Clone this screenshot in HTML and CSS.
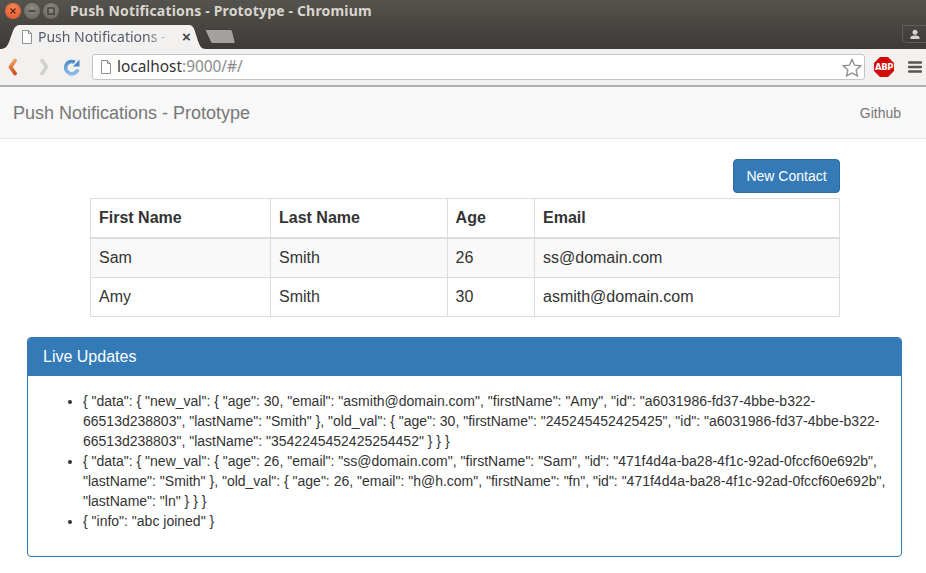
FILE: index.html
```html
<!DOCTYPE html>
<html lang="en">
<head>
<meta charset="utf-8">
<title>Push Notifications - Prototype</title>
<link rel="stylesheet" href="styles.css">
</head>
<body>
<header class="chrome">
  <div class="titlebar">
    <div class="win-buttons">
      <span class="win-btn win-close"><svg width="8" height="8" viewBox="0 0 8 8"><path d="M1.500 1.500l5 5M6.500 1.500l-5 5" stroke="#6b2410" stroke-width="1.400"/></svg></span>
      <span class="win-btn win-min"><svg width="8" height="8" viewBox="0 0 8 8"><path d="M0.500 4h7" stroke="#3c3b37" stroke-width="1.500"/></svg></span>
      <span class="win-btn win-max"><svg width="8" height="8" viewBox="0 0 8 8"><rect x="1" y="1" width="6" height="6" fill="none" stroke="#3c3b37" stroke-width="1.300"/></svg></span>
    </div>
    <span class="win-title">Push Notifications - Prototype - Chromium</span>
  </div>
  <div class="tabstrip">
    <div class="tab">
      <svg class="tab-shape" width="206" height="26" viewBox="0 0 206 26"><path d="M0 26C5 26 7 24 9 19L13 8C14.500 4.500 16 2 20 2H188C192 2 193.500 4 194.500 7L198 18C200 23 201 26 206 26Z" fill="#f2f1f0"/></svg>
      <svg class="tab-page" width="12" height="14" viewBox="0 0 12 14"><path d="M1.500.5h6l3 3v10h-9z" fill="#fff" stroke="#8f8f8f"/><path d="M7.500.5v3h3" fill="none" stroke="#8f8f8f"/></svg>
      <span class="tab-label">Push Notifications -</span>
      <span class="tab-x">×</span>
    </div>
    <svg class="newtab" width="32" height="15" viewBox="0 0 32 15"><path d="M2.500 .5H26C27.500 .5 28 1.200 28.500 2.500L31 12.500C31.300 13.800 30.800 14.500 29.500 14.500H9C7.500 14.500 7 13.800 6.500 12.800L1.500 2C1 1 1.500 .5 2.500 .5Z" fill="#a3a29e" stroke="#35342f" stroke-width=".8"/></svg>
    <div class="profile"><svg width="12" height="11" viewBox="0 0 12 11"><circle cx="6" cy="3.200" r="2.500" fill="#d5d3ce"/><path d="M1.500 10V8.500C1.500 7 4 6.500 6 6.500S10.500 7 10.500 8.500V10Z" fill="#d5d3ce"/></svg></div>
  </div>
  <div class="toolbar">
    <svg class="back" width="11" height="18" viewBox="0 0 11 18">
      <defs><linearGradient id="backFill" x1="0" y1="0" x2="0" y2="1"><stop offset="0" stop-color="#eda05f"/><stop offset="1" stop-color="#cf4f1d"/></linearGradient></defs>
      <path d="M8 2.500L3.500 9 8 15.500" fill="none" stroke="url(#backFill)" stroke-width="3.800" stroke-linecap="round" stroke-linejoin="round"/>
    </svg>
    <svg class="forward" width="11" height="18" viewBox="0 0 11 18"><path d="M3 2.500L7.500 9 3 15.500" fill="none" stroke="#d2d1ce" stroke-width="3.800" stroke-linecap="round" stroke-linejoin="round"/></svg>
    <svg class="reload" width="18" height="18" viewBox="0 0 18 18">
      <defs><linearGradient id="reloadFill" x1="0" y1="0" x2="0" y2="1"><stop offset="0" stop-color="#4f8fcb"/><stop offset="1" stop-color="#8dbce6"/></linearGradient></defs>
      <path d="M14.800 11.500A6.200 6.200 0 1 1 11.800 4.200" fill="none" stroke="url(#reloadFill)" stroke-width="3.600"/>
      <path d="M10 8.500H16.500V1.500Z" fill="#4a8ac6"/>
    </svg>
    <div class="omnibox">
      <svg width="12" height="14" viewBox="0 0 12 14"><path d="M1.500.5h6l3 3v10h-9z" fill="#fff" stroke="#8f8f8f"/><path d="M7.500.5v3h3" fill="none" stroke="#8f8f8f"/></svg>
      <span class="url"><span class="url-host">localhost</span>:9000/#/</span>
      <svg class="star" width="20" height="19" viewBox="0 0 20 19"><path d="M10 1.500l2.600 5.600 6 .7-4.500 4.100 1.300 6L10 14.900l-5.400 3 1.300-6L1.400 7.800l6-.7z" fill="#fff" stroke="#8e8e8e" stroke-width="1.300"/></svg>
    </div>
    <div class="abp">ABP</div>
    <svg class="menu-icon" width="14" height="14" viewBox="0 0 14 14"><path d="M1 2.500h12M1 7h12M1 11.500h12" stroke="#55544f" stroke-width="2.400" stroke-linecap="round"/></svg>
  </div>
</header>

<nav class="navbar">
  <a class="brand">Push Notifications - Prototype</a>
  <a class="nav-link">Github</a>
</nav>

<main class="content">
  <section class="contacts">
    <div class="actions"><button class="btn-primary">New Contact</button></div>
    <table class="table">
      <colgroup><col class="col-first"><col class="col-last"><col class="col-age"><col class="col-email"></colgroup>
      <thead><tr><th>First Name</th><th>Last Name</th><th>Age</th><th>Email</th></tr></thead>
      <tbody>
        <tr class="striped"><td>Sam</td><td>Smith</td><td>26</td><td>ss@domain.com</td></tr>
        <tr><td>Amy</td><td>Smith</td><td>30</td><td>asmith@domain.com</td></tr>
      </tbody>
    </table>
  </section>
  <section class="panel">
    <div class="panel-heading">Live Updates</div>
    <div class="panel-body">
      <ul class="updates">
        <li>{ "data": { "new_val": { "age": 30, "email": "asmith@domain.com", "firstName": "Amy", "id": "a6031986-fd37-4bbe-b322-66513d238803", "lastName": "Smith" }, "old_val": { "age": 30, "firstName": "245245452425425", "id": "a6031986-fd37-4bbe-b322-66513d238803", "lastName": "3542245452425254452" } } }</li>
        <li>{ "data": { "new_val": { "age": 26, "email": "ss@domain.com", "firstName": "Sam", "id": "471f4d4a-ba28-4f1c-92ad-0fccf60e692b", "lastName": "Smith" }, "old_val": { "age": 26, "email": "h@h.com", "firstName": "fn", "id": "471f4d4a-ba28-4f1c-92ad-0fccf60e692b", "lastName": "ln" } } }</li>
        <li>{ "info": "abc joined" }</li>
      </ul>
    </div>
  </section>
</main>
</body>
</html>
```
FILE: styles.css
```css
* { box-sizing: border-box; }
html, body { margin: 0; padding: 0; }
body {
  width: 926px;
  height: 573px;
  overflow: hidden;
  background: #fff;
  color: #333;
  font-family: "Liberation Sans", Arial, sans-serif;
  font-size: 14px;
  line-height: 20px;
}

/* Browser chrome */
.chrome {
  background: linear-gradient(#55534d 0, #3c3b37 48px);
}
.titlebar {
  height: 23px;
  display: flex;
  align-items: center;
  padding: 0 0 1px 5px;
}
.win-buttons { display: flex; gap: 3px; }
.win-btn {
  width: 16px;
  height: 16px;
  border-radius: 50%;
  display: flex;
  align-items: center;
  justify-content: center;
}
.win-close { background: radial-gradient(circle at 50% 35%, #f58a5c, #dc4f23); }
.win-min, .win-max { background: radial-gradient(circle at 50% 35%, #8e8c86, #62605a); }
.win-title {
  margin-left: 11px;
  color: #d8d5cd;
  font-family: "Noto Sans", "Open Sans", sans-serif;
  font-weight: 700;
  font-size: 14px;
  letter-spacing: .17px;
}
.tabstrip {
  height: 26px;
  display: flex;
  align-items: flex-end;
}
.tab {
  position: relative;
  width: 206px;
  height: 26px;
  display: flex;
  align-items: center;
  padding: 2px 0 0 21px;
}
.tab-shape { position: absolute; left: 0; top: 0; }
.tab-page { position: relative; flex: none; }
.tab-label {
  position: relative;
  margin-left: 5px;
  width: 134px;
  overflow: hidden;
  white-space: nowrap;
  color: #555c68;
  font-family: "Noto Sans", "Open Sans", sans-serif;
  font-size: 14px;
  -webkit-mask-image: linear-gradient(90deg, #000 82%, rgba(0,0,0,.3) 93%);
  mask-image: linear-gradient(90deg, #000 82%, rgba(0,0,0,.3) 93%);
}
.tab-x {
  position: relative;
  margin-left: 10px;
  color: #444;
  font-weight: 700;
  font-size: 15px;
}
.newtab { margin: 0 0 5px -2px; }
.profile {
  margin: 0 0 6px auto;
  width: 24px;
  height: 18px;
  border: 1px solid #5f5d57;
  border-right: 0;
  border-radius: 2px 0 0 5px;
  display: flex;
  align-items: center;
  justify-content: center;
}
.toolbar {
  height: 38px;
  background: #f2f1f0;
  border-bottom: 2px solid #aeaeae;
  display: flex;
  align-items: center;
  padding: 0 4px 0 7px;
}
.back, .forward, .reload { flex: none; }
.forward { margin-left: 21px; }
.reload { margin-left: 13px; }
.omnibox {
  flex: none;
  width: 773px;
  height: 26px;
  margin-left: 11px;
  background: #fff;
  border: 1px solid #c4c4c4;
  border-radius: 3px;
  display: flex;
  align-items: center;
  padding: 0 2px 0 7px;
}
.url {
  margin-left: 5px;
  color: #8a8a8a;
  font-family: "Noto Sans", "Open Sans", sans-serif;
  font-size: 15.400px;
}
.url-host { color: #333; }
.star { margin-left: auto; }
.abp {
  flex: none;
  width: 20px;
  height: 20px;
  margin-left: 9px;
  background: #d20a0a;
  color: #fff;
  clip-path: polygon(30% 0, 70% 0, 100% 30%, 100% 70%, 70% 100%, 30% 100%, 0 70%, 0 30%);
  font-family: "DejaVu Sans", "Liberation Sans", sans-serif;
  font-weight: 700;
  font-size: 8.500px;
  letter-spacing: -.5px;
  line-height: 20px;
  text-align: center;
}
.menu-icon { flex: none; margin-left: 14px; }

/* Page */
.navbar {
  height: 52px;
  background: #f8f8f8;
  border-bottom: 1px solid #e7e7e7;
  display: flex;
  align-items: center;
  justify-content: space-between;
  padding: 0 25px 0 13px;
}
.brand { color: #777; font-size: 18px; }
.nav-link { color: #777; font-size: 14px; }

.content { padding: 20px 24px 0 27px; }
.contacts { width: 750px; margin-left: 63px; }
.actions { display: flex; justify-content: flex-end; margin-bottom: 5px; }
.btn-primary {
  height: 34px;
  width: 107px;
  padding: 0;
  background: #337ab7;
  border: 1px solid #2e6da4;
  border-radius: 4px;
  color: #fff;
  font: 14px/20px "Liberation Sans", Arial, sans-serif;
}
.table {
  width: 749px;
  table-layout: fixed;
  border-collapse: collapse;
  font-size: 16px;
  line-height: 22px;
}
.col-first { width: 180px; }
.col-last { width: 176.600px; }
.col-age { width: 87.400px; }
.col-email { width: 305px; }
.table th, .table td {
  border: 1px solid #ddd;
  padding: 8px;
  text-align: left;
  color: #333;
}
.table th { border-bottom-width: 2px; }
.striped td { background: #f9f9f9; }

.panel {
  margin-top: 20px;
  width: 875px;
  border: 1px solid #337ab7;
  border-radius: 4px;
  overflow: hidden;
}
.panel-heading {
  height: 38px;
  background: #337ab7;
  color: #fff;
  font-size: 16px;
  line-height: 38px;
  padding-left: 15px;
}
.panel-body { padding: 15px; height: 180px; }
.updates { margin: 0; padding-left: 40px; }
```
